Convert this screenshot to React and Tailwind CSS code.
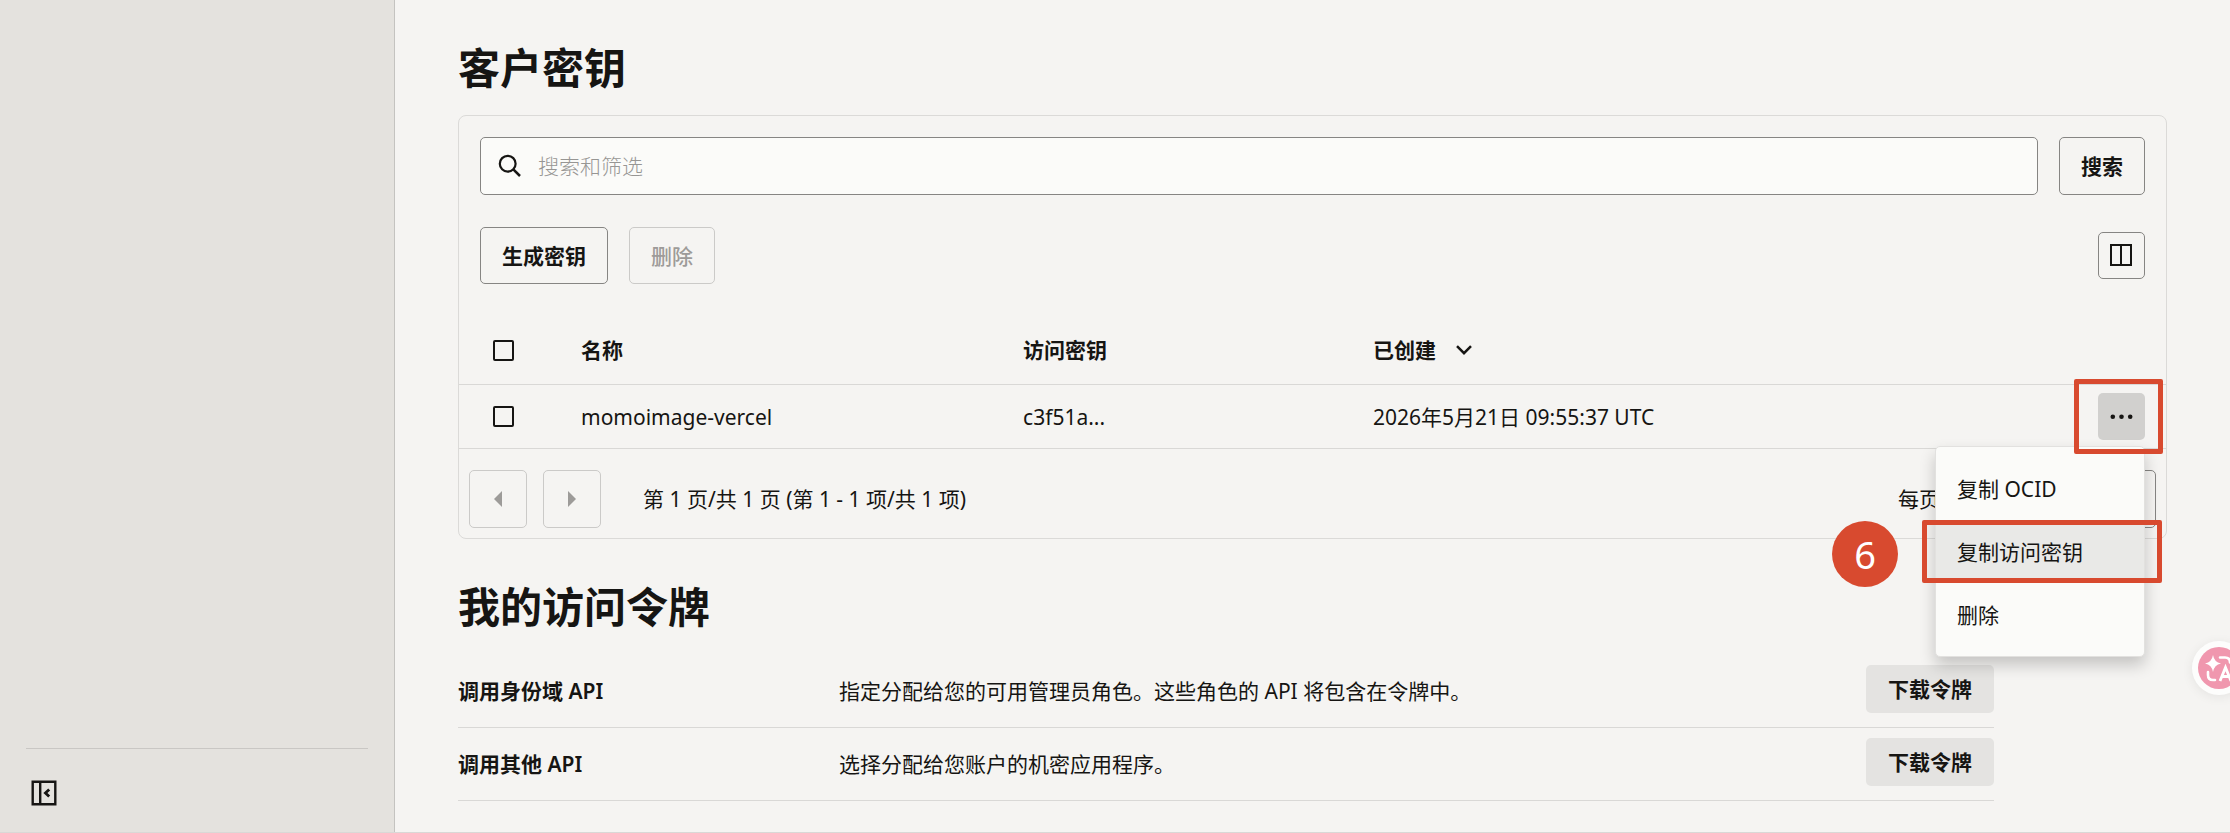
import React from "react";

const outlineButton =
  "shrink-0 rounded-[5px] border border-[#868583] px-[21px] text-[21px] leading-[28px] font-semibold text-[#161513] whitespace-nowrap";

const checkbox =
  "block size-[21px] appearance-none rounded-[2px] border-2 border-[#161513] bg-transparent checked:bg-[#161513]";

const tokens = [
  { name: "调用身份域 API", text: "指定分配给您的可用管理员角色。这些角色的 API 将包含在令牌中。" },
  { name: "调用其他 API", text: "选择分配给您账户的机密应用程序。" },
];

function Sidebar() {
  return (
    <aside className="flex w-[395px] shrink-0 flex-col justify-end border-r border-[#c4c3c0] bg-[#e4e2de] px-[26px]">
      <div className="border-t border-[#c9c7c4] pt-[31px] pb-[26px]">
        <button type="button" aria-label="折叠导航" className="ml-[5px] block">
          <svg viewBox="0 0 26 26" className="size-[26px]" fill="none" stroke="#161513" strokeWidth="2.4">
            <path d="M1.7 1.7h22.6v22.6H1.7zM9.2 1.7v22.6" />
            <path d="M18.2 9.4l-3.8 3.6 3.8 3.6" strokeWidth="2.8" />
          </svg>
        </button>
      </div>
    </aside>
  );
}

function RowMenu() {
  const item = "block h-[63px] w-full px-[21px] text-left text-[21px] whitespace-nowrap";
  return (
    <div
      role="menu"
      className="absolute top-[53px] right-0 z-10 w-[210px] rounded-[5px] border border-[#e2e1df] bg-[#fbfbf9] py-[10px] text-[#161513] shadow-[0_8px_16px_rgba(0,0,0,0.2)]"
    >
      <button type="button" role="menuitem" className={item}>
        复制 OCID
      </button>
      <div className="relative">
        <button type="button" role="menuitem" className={item + " bg-[#e9e9e7]"}>
          复制访问密钥
        </button>
        <span className="pointer-events-none absolute inset-y-0 -right-[18px] -left-[14px] rounded-[2px] border-[5px] border-[#d84a2f]" />
        <span className="absolute top-px right-[246px] flex size-[66px] items-center justify-center rounded-full bg-[#d84a2f] text-[38px] leading-none text-white">
          6
        </span>
      </div>
      <button type="button" role="menuitem" className={item}>
        删除
      </button>
    </div>
  );
}

function Secrets() {
  return (
    <section>
      <h1 className="text-[42px] leading-[48px] font-bold">客户密钥</h1>
      <div className="mt-[23px] rounded-[8px] border border-[#dbdad8]">
        <div className="flex gap-[21px] px-[21px] pt-[21px]">
          <label className="flex h-[58px] flex-1 items-center rounded-[5px] border border-[#868583] bg-[#fbfbf9] pl-[17px]">
            <svg viewBox="0 0 24 24" className="size-[24px]" fill="none" stroke="#161513" strokeWidth="2.2">
              <circle cx="9.7" cy="9.7" r="7.9" />
              <path d="M15.3 15.3l6.7 6.7" strokeWidth="2.5" />
            </svg>
            <input
              type="search"
              aria-label="搜索和筛选"
              placeholder="搜索和筛选"
              className="ml-4 min-w-0 flex-1 bg-transparent text-[21px] leading-[28px] font-light outline-none placeholder:text-[#979694]"
            />
          </label>
          <button type="button" className={outlineButton + " h-[58px]"}>搜索</button>
        </div>

        <div className="mt-8 flex items-center gap-[21px] px-[21px]">
          <button type="button" className={outlineButton + " h-[57px]"}>生成密钥</button>
          <button
            type="button"
            disabled
            className="h-[57px] rounded-[5px] border border-[#cbcac8] px-[21px] text-[21px] leading-[28px] font-medium text-[#9d9b99]"
          >
            删除
          </button>
          <button
            type="button"
            aria-label="管理列"
            className="ml-auto flex size-[47px] items-center justify-center rounded-[5px] border border-[#868583]"
          >
            <svg viewBox="0 0 23 23" className="size-[23px]" fill="none" stroke="#161513" strokeWidth="2">
              <path d="M1 1h20v20H1zM11 1v20" />
            </svg>
          </button>
        </div>

        <table className="mt-8 w-full table-fixed border-separate border-spacing-0 text-left text-[21px] leading-[28px]">
          <colgroup>
            <col className="w-[122px]" />
            <col className="w-[25.9%]" />
            <col className="w-[20.5%]" />
            <col />
            <col className="w-[90px]" />
          </colgroup>
          <thead>
            <tr className="h-[69px] [&>th]:border-b [&>th]:border-[#d9d8d6] [&>th]:p-0 [&>th]:font-semibold">
              <th scope="col">
                <input type="checkbox" aria-label="全选" className={checkbox + " ml-[34px]"} />
              </th>
              <th scope="col">名称</th>
              <th scope="col">访问密钥</th>
              <th scope="col">
                <span className="flex items-center gap-5">
                  已创建
                  <svg viewBox="0 0 16 10" className="h-[10px] w-[16px]" fill="none" stroke="#161513" strokeWidth="2.5">
                    <path d="M1 1.2l7 7 7-7" />
                  </svg>
                </span>
              </th>
              <th scope="col" aria-label="操作" />
            </tr>
          </thead>
          <tbody>
            <tr className="h-[64px] [&>td]:border-b [&>td]:border-[#d9d8d6] [&>td]:p-0">
              <td>
                <input type="checkbox" aria-label="选择 momoimage-vercel" className={checkbox + " ml-[34px]"} />
              </td>
              <td>momoimage-vercel</td>
              <td>c3f51a...</td>
              <td>2026年5月21日 09:55:37 UTC</td>
              <td>
                <div className="relative mr-[21px] ml-auto size-[47px]">
                  <button
                    type="button"
                    aria-label="操作菜单"
                    className="flex size-[47px] items-center justify-center rounded-[5px] bg-[#d1d0ce]"
                  >
                    <svg viewBox="0 0 24 6" className="h-[6px] w-[24px]" fill="#161513">
                      <circle cx="2.8" cy="2.7" r="2.3" />
                      <circle cx="11.5" cy="2.7" r="2.3" />
                      <circle cx="20.2" cy="2.7" r="2.3" />
                    </svg>
                  </button>
                  <RowMenu />
                  <span className="pointer-events-none absolute -top-[14px] -right-[18px] -bottom-[14px] -left-[24px] z-20 rounded-[2px] border-[5px] border-[#d84a2f]" />
                </div>
              </td>
            </tr>
          </tbody>
        </table>

        <div className="flex items-center gap-4 px-[10px] pt-[21px] pb-[10px] text-[21px] leading-[28px]">
          <button
            type="button"
            disabled
            aria-label="上一页"
            className="flex size-[58px] items-center justify-center rounded-[5px] border border-[#cbcac8]"
          >
            <svg viewBox="0 0 8 16" className="h-[16px] w-[8px]" fill="#9d9b99">
              <path d="M8 0v16L0 8z" />
            </svg>
          </button>
          <button
            type="button"
            disabled
            aria-label="下一页"
            className="flex size-[58px] items-center justify-center rounded-[5px] border border-[#cbcac8]"
          >
            <svg viewBox="0 0 8 16" className="h-[16px] w-[8px]" fill="#9d9b99">
              <path d="M0 0v16l8-8z" />
            </svg>
          </button>
          <span className="ml-[26px]">第 1 页/共 1 页 (第 1 - 1 项/共 1 项)</span>
          <label htmlFor="page-size" className="ml-auto">
            每页项数
          </label>
          <select
            id="page-size"
            className="h-[58px] w-[158px] appearance-none rounded-[5px] border border-[#868583] bg-transparent px-4"
            defaultValue="25"
          >
            <option value="25">25</option>
            <option value="50">50</option>
          </select>
        </div>
      </div>
    </section>
  );
}

function Tokens() {
  return (
    <section className="mt-[44px] max-w-[1536px]">
      <h2 className="text-[42px] leading-[48px] font-bold">我的访问令牌</h2>
      <ul className="mt-[24px] text-[21px]">
        {tokens.map((token) => (
          <li key={token.name} className="flex h-[73px] items-start border-b border-[#d9d8d6] pt-[10px]">
            <h3 className="w-[381px] shrink-0 leading-[52px] font-semibold">{token.name}</h3>
            <p className="flex-1 leading-[52px]">{token.text}</p>
            <button type="button" className="h-[48px] rounded-[5px] bg-[#e4e3e1] px-[22px] pt-px font-semibold">
              下载令牌
            </button>
          </li>
        ))}
      </ul>
    </section>
  );
}

function TranslateWidget() {
  return (
    <button
      type="button"
      aria-label="翻译"
      className="fixed top-[641px] -right-[16px] z-30 flex size-[54px] items-center justify-center rounded-full bg-[#fdfdfc] shadow-[0_2px_12px_rgba(0,0,0,0.07)]"
    >
      <svg viewBox="0 0 42 42" className="size-[42px]">
        <circle cx="21" cy="21" r="21" fill="#f097ae" />
        <path d="M15 8q1.200 7.200 8 8.500-6.800 1.300-8 8.500-1.200-7.200-8-8.500 6.800-1.300 8-8.500z" fill="#fff" />
        <path d="M22 10.500h5q5 0 5 5" fill="none" stroke="#fff" strokeWidth="2.600" strokeLinecap="round" />
        <path d="M10 25v3q0 5 5 5h2" fill="none" stroke="#fff" strokeWidth="2.600" strokeLinecap="round" />
        <path d="M22 34l5.500-13.500L33 34M24.200 29.500h6.600" fill="none" stroke="#fff" strokeWidth="2.800" />
      </svg>
    </button>
  );
}

export default function App() {
  return (
    <div className="flex min-h-screen overflow-hidden border-b border-[#d9d8d6] bg-[#f5f4f2] font-['Noto_Sans','Noto_Sans_CJK_SC',sans-serif] text-[#161513]">
      <Sidebar />
      <main className="min-w-0 flex-1 px-[63px] pt-[44px]">
        <Secrets />
        <Tokens />
      </main>
      <TranslateWidget />
    </div>
  );
}
